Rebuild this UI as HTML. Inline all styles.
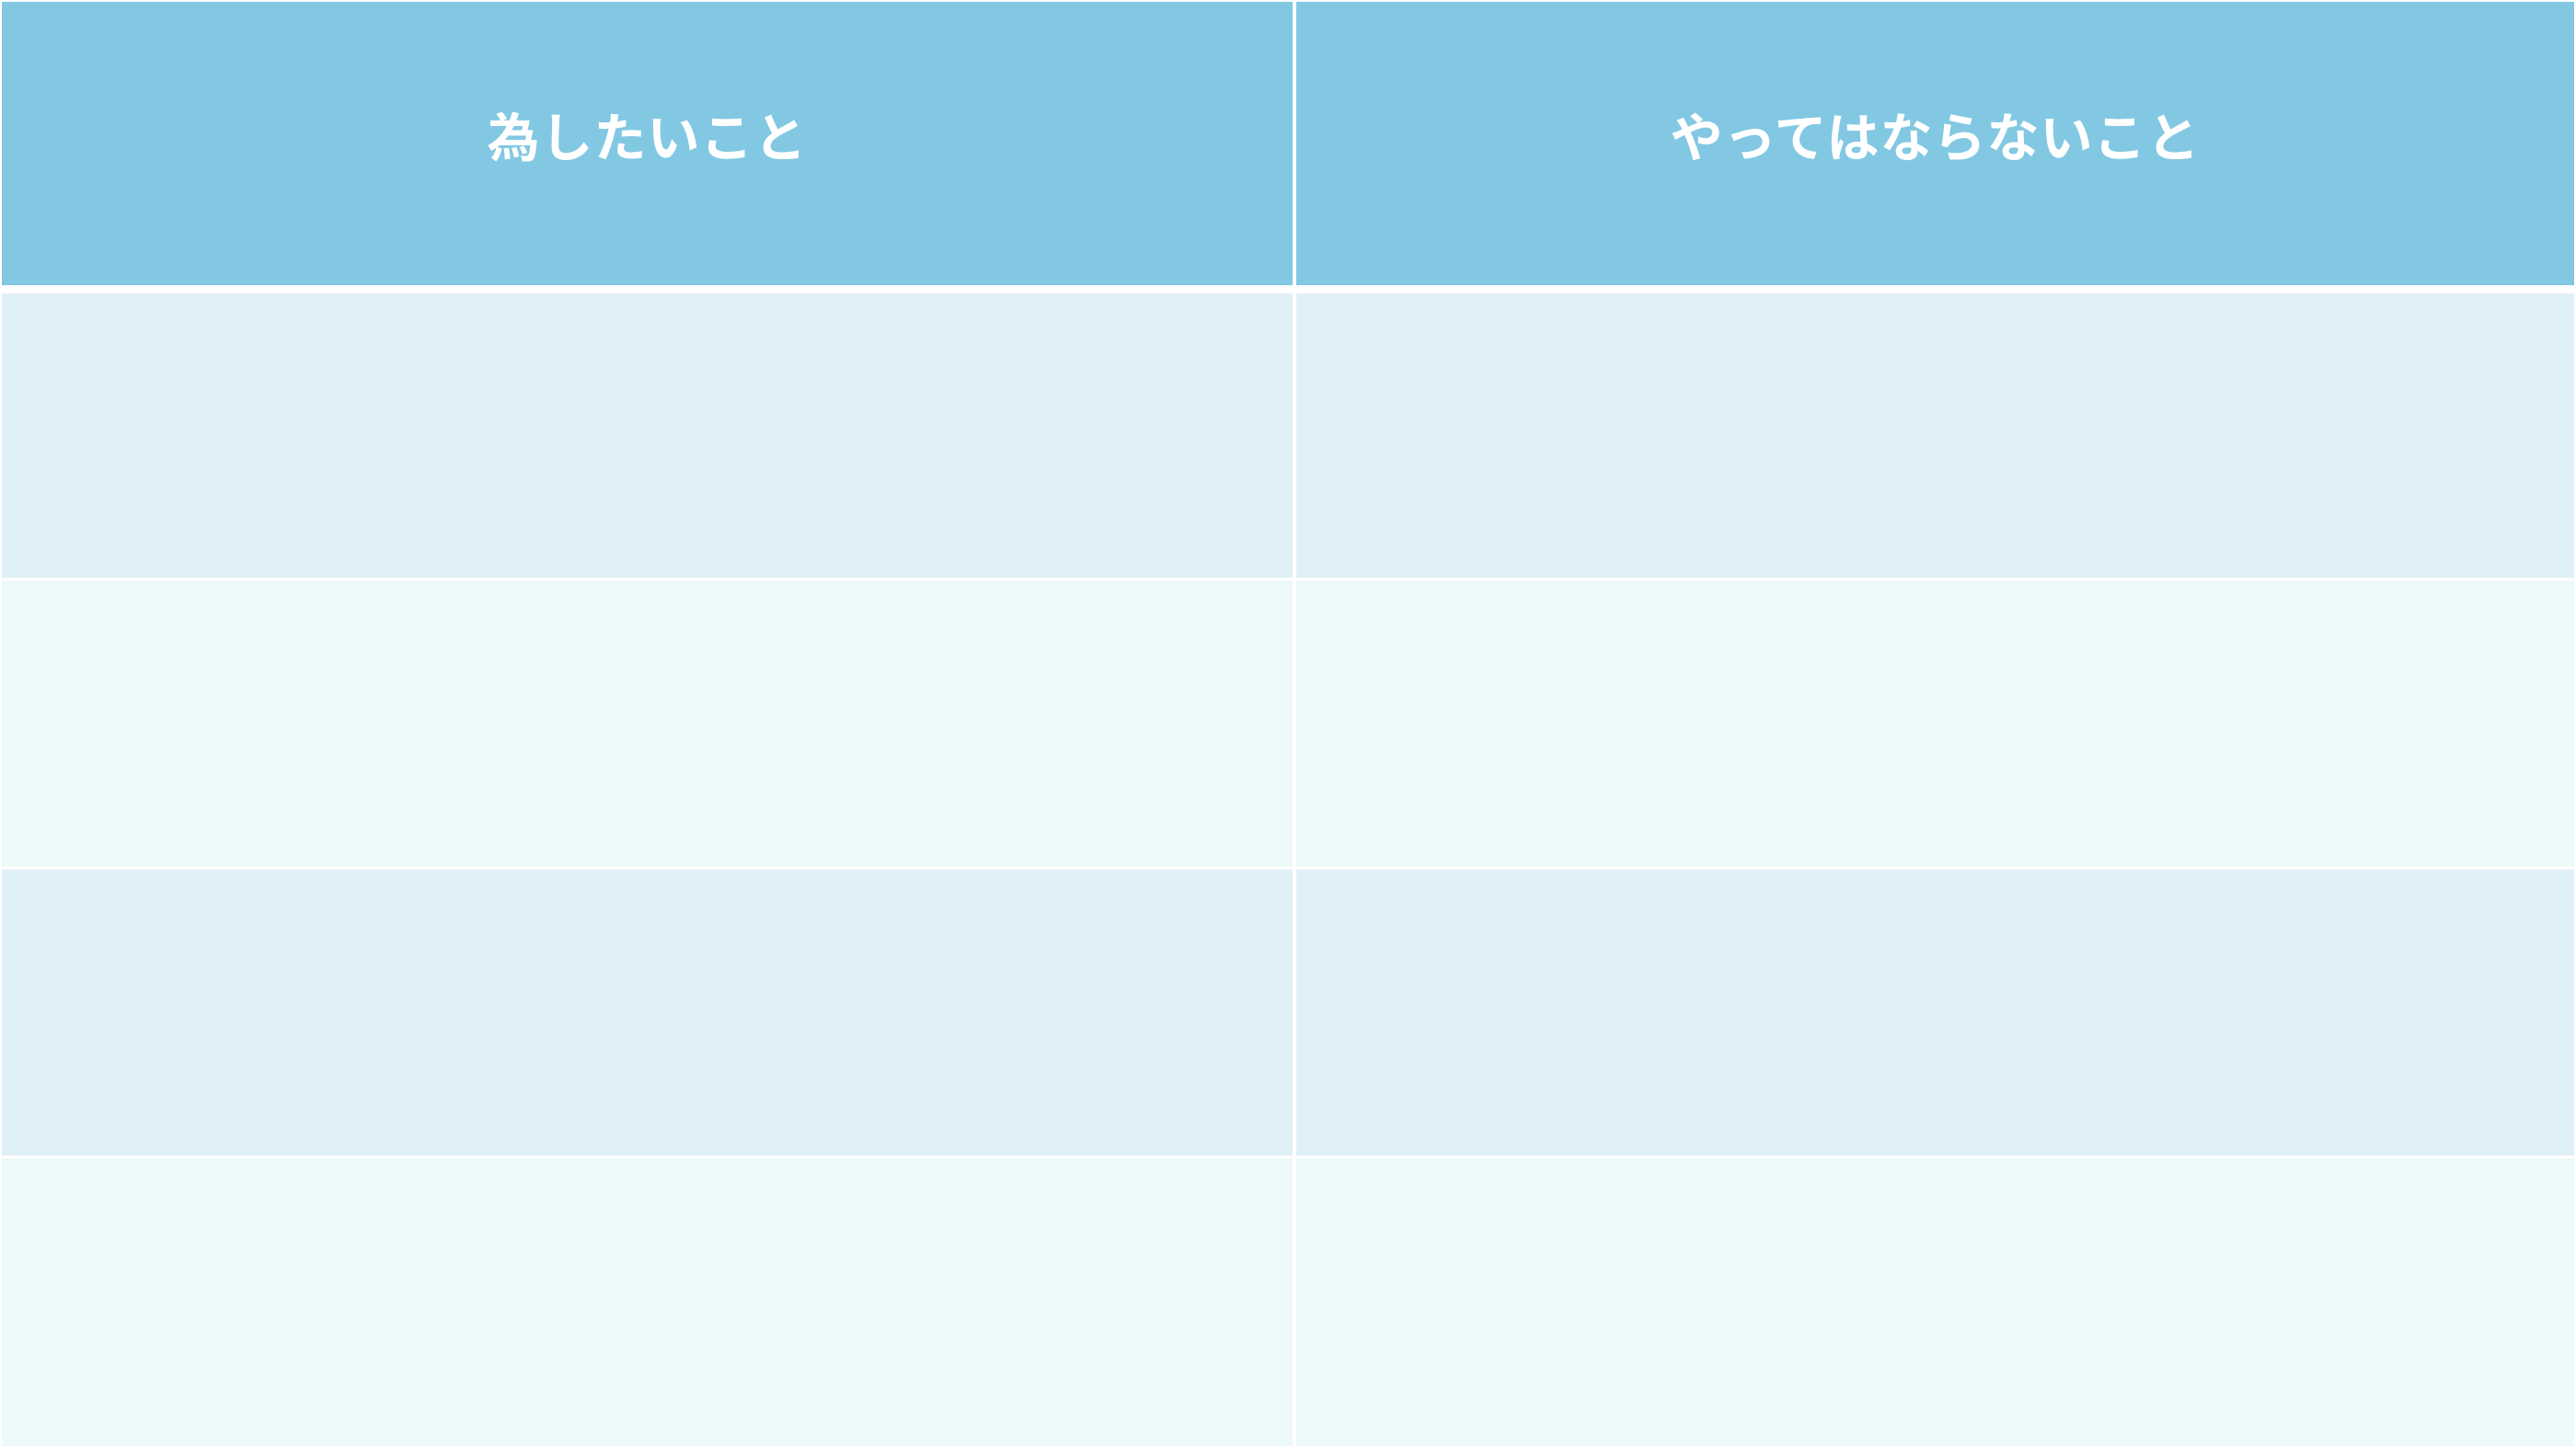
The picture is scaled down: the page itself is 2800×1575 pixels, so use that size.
<!DOCTYPE html>
<html><head><meta charset="utf-8"><style>
html,body{margin:0;padding:0;background:#fff;width:2800px;height:1575px;overflow:hidden}
div{position:absolute;box-sizing:border-box}
.h{background:#82c8e3;color:#fff;font-family:"Liberation Sans","Noto Sans CJK JP",sans-serif;font-weight:bold;font-size:57px;display:flex;align-items:center;justify-content:center;letter-spacing:1px;padding-bottom:20px}
.a{background:#e0f0f7}.b{background:#edf9f9}
</style></head><body>
<div class="h" style="left:2px;top:2px;width:1403px;height:308px">為したいこと</div>
<div class="h" style="left:1409px;top:2px;width:1389px;height:308px">やってはならないこと</div>
<div class="a" style="left:2px;top:319px;width:1403px;height:309px"></div>
<div class="a" style="left:1409px;top:319px;width:1389px;height:309px"></div>
<div class="b" style="left:2px;top:631px;width:1403px;height:311px"></div>
<div class="b" style="left:1409px;top:631px;width:1389px;height:311px"></div>
<div class="a" style="left:2px;top:945px;width:1403px;height:311px"></div>
<div class="a" style="left:1409px;top:945px;width:1389px;height:311px"></div>
<div class="b" style="left:2px;top:1259px;width:1403px;height:313px"></div>
<div class="b" style="left:1409px;top:1259px;width:1389px;height:313px"></div>
</body></html>
